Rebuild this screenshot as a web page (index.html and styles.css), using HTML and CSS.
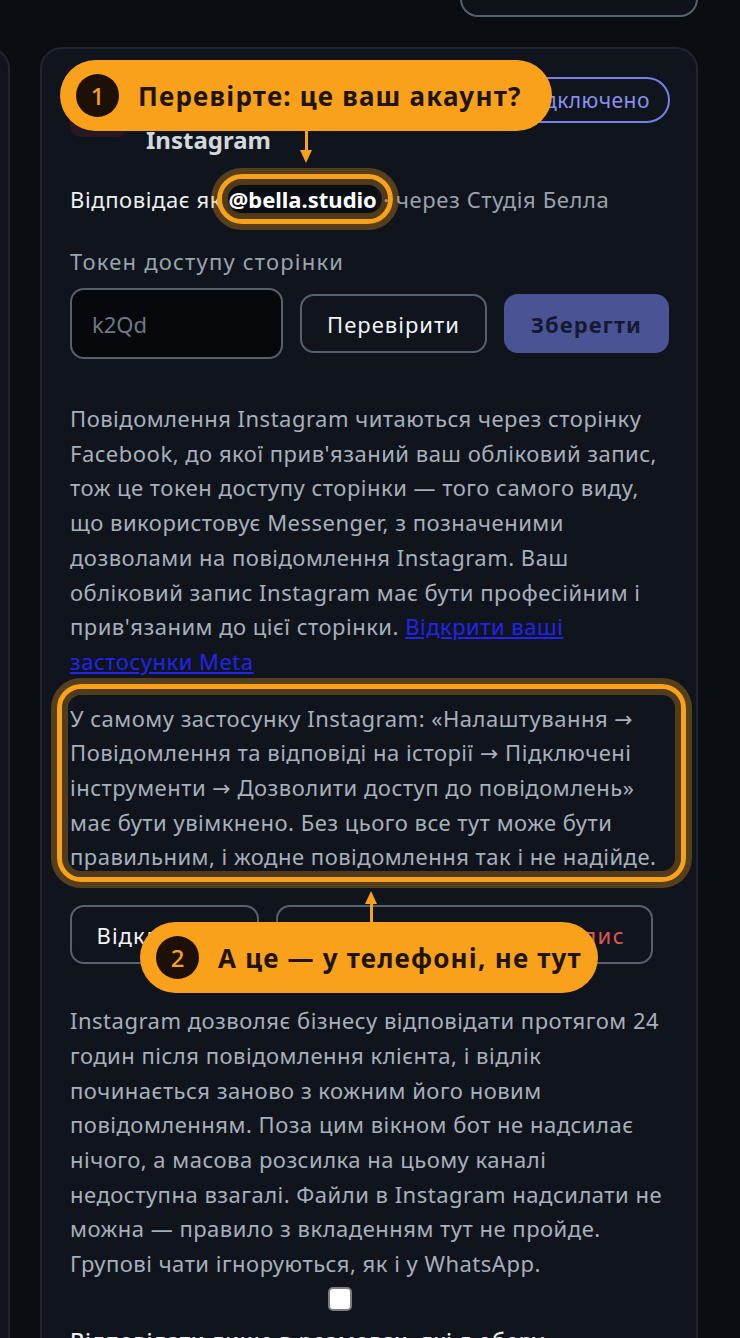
FILE: index.html
```html
<!DOCTYPE html>
<html lang="uk">
<head>
<meta charset="utf-8">
<title>Instagram</title>
<link rel="stylesheet" href="styles.css">
</head>
<body>
<div class="page">
  <div class="topbar">
    <button class="top-btn" type="button"></button>
  </div>
  <div class="cards">
    <div class="card card-prev"></div>
    <section class="card card-main">
      <header class="card-head">
        <div class="channel-icon"></div>
        <h2 class="channel-title">Instagram</h2>
        <span class="status-pill">Підключено</span>
      </header>

      <p class="identity">Відповідає як <span class="handle hl-ring">@bella.studio</span> <span class="muted">· через Студія Белла</span></p>

      <label class="field-label" for="token">Токен доступу сторінки</label>
      <div class="token-row">
        <input class="token-input" id="token" type="text" placeholder="k2Qd">
        <button class="btn btn-outline" type="button">Перевірити</button>
        <button class="btn btn-primary" type="button">Зберегти</button>
      </div>

      <p class="help">Повідомлення Instagram читаються через сторінку<br>Facebook, до якої прив'язаний ваш обліковий запис,<br>тож це токен доступу сторінки — того самого виду,<br>що використовує Messenger, з позначеними<br>дозволами на повідомлення Instagram. Ваш<br>обліковий запис Instagram має бути професійним і<br>прив'язаним до цієї сторінки. <a href="#">Відкрити ваші<br>застосунки Meta</a></p>

      <p class="help help-box hl-ring">У самому застосунку Instagram: «Налаштування →<br>Повідомлення та відповіді на історії → Підключені<br>інструменти → Дозволити доступ до повідомлень»<br>має бути увімкнено. Без цього все тут може бути<br>правильним, і жодне повідомлення так і не надійде.</p>

      <div class="action-row">
        <button class="btn btn-outline btn-wide" type="button">Відключити</button>
        <button class="btn btn-outline btn-danger" type="button">Видалити обліковий запис</button>
      </div>

      <p class="help">Instagram дозволяє бізнесу відповідати протягом 24<br>годин після повідомлення клієнта, і відлік<br>починається заново з кожним його новим<br>повідомленням. Поза цим вікном бот не надсилає<br>нічого, а масова розсилка на цьому каналі<br>недоступна взагалі. Файли в Instagram надсилати не<br>можна — правило з вкладенням тут не пройде.<br>Групові чати ігноруються, як і у WhatsApp.</p>

      <label class="check-row">
        <input class="check" type="checkbox">
        <span class="check-text">Відповідати лише в розмовах, які я оберу</span>
      </label>

      <div class="tip tip-1"><span class="tip-num">1</span><span class="tip-text">Перевірте: це ваш акаунт?</span></div>
      <div class="arrow arrow-down"></div>
      <div class="tip tip-2"><span class="tip-num">2</span><span class="tip-text">А це — у телефоні, не тут</span></div>
      <div class="arrow arrow-up"></div>
    </section>
  </div>
</div>
</body>
</html>
```
FILE: styles.css
```css
* { box-sizing: border-box; }
html, body { margin: 0; padding: 0; }
body {
  background: #0a0d12;
  color: #e6e9ed;
  font-family: "Noto Sans", "DejaVu Sans", sans-serif;
  overflow: hidden;
}
.page { width: 740px; }
.topbar {
  display: flex;
  justify-content: flex-end;
  padding-right: 42px;
  height: 17px;
}
.top-btn {
  width: 238px;
  height: 60px;
  margin-top: -43px;
  background: #0e121a;
  border: 2px solid #56616b;
  border-radius: 18px;
}
.cards {
  display: flex;
  gap: 30px;
  margin-top: 30px;
  margin-left: -290px;
  align-items: flex-start;
}
.card {
  background: #10151d;
  border: 2px solid #20262f;
  border-radius: 22px;
  flex: none;
}
.card-prev { width: 300px; height: 1400px; }
.card-main {
  position: relative;
  width: 658px;
  padding: 28px 26px 0 28px;
  height: 1400px;
}

.card-head {
  display: flex;
  align-items: flex-start;
  gap: 18px;
}
.channel-icon {
  width: 58px;
  height: 58px;
  margin-top: 2px;
  border-radius: 12px;
  background: #2a1820;
  flex: none;
}
.channel-title {
  margin: 47px 0 0 0;
  font-size: 24px;
  line-height: 31px;
  font-weight: 700;
  color: #d3d8de;
  flex: 1;
}
.status-pill {
  flex: none;
  height: 46px;
  padding: 0 18px 0 24px;
  display: flex;
  align-items: center;
  border: 2px solid #7580e6;
  border-radius: 23px;
  color: #8891f0;
  font-size: 21px;
  letter-spacing: 0.5px;
}

.identity {
  margin: 27px 0 0 0;
  font-size: 22px;
  line-height: 35px;
  color: #eef0f3;
  letter-spacing: 0.6px;
}
.handle {
  font-weight: 700;
  color: #ffffff;
  background: #0b0e14;
  border-radius: 8px;
  letter-spacing: 0;
}
.handle.hl-ring::after {
  inset: -10px -16px -10px -11px;
  border-radius: 28px;
}
.muted { color: #9aa3ad; }

.field-label {
  display: block;
  margin-top: 27px;
  font-size: 22px;
  line-height: 35px;
  color: #9aa4ae;
  letter-spacing: 1.2px;
}
.token-row {
  display: flex;
  align-items: center;
  gap: 17px;
  margin-top: 9px;
}
.token-input {
  width: 213px;
  height: 71px;
  background: #06080c;
  border: 2px solid #56616b;
  border-radius: 14px;
  padding: 0 20px;
  font: inherit;
  font-size: 22px;
  color: #e6e9ed;
  outline: none;
}
.token-input::placeholder { color: #6f7882; }
.btn {
  height: 59px;
  border-radius: 14px;
  font-family: inherit;
  font-size: 22px;
  padding: 0 12px;
  letter-spacing: 1px;
}
.btn-outline {
  background: transparent;
  border: 2px solid #56616b;
  color: #f2f4f6;
}
.token-row .btn-outline { width: 187px; }
.btn-primary {
  width: 165px;
  background: #4a5495;
  border: none;
  color: #151a33;
  font-weight: 700;
}

.help {
  margin: 42px 0 0 0;
  font-size: 22px;
  line-height: 34.7px;
  color: #a7b0bb;
  letter-spacing: 0.5px;
  white-space: nowrap;
}
.help a { color: #2323ee; }
.help-box { margin-top: 22px; }
.help-box.hl-ring::after {
  inset: -17px -16px -8px -13px;
  border-radius: 24px;
}

.hl-ring { position: relative; }
.hl-ring::after {
  content: "";
  position: absolute;
  border: 5px solid #f9a11b;
  box-shadow: 0 0 0 6px rgba(249, 161, 27, 0.3), inset 0 0 0 6px rgba(249, 161, 27, 0.28);
  pointer-events: none;
}

.action-row {
  display: flex;
  gap: 17px;
  margin-top: 31px;
}
.btn-wide { width: 189px; }
.btn-danger { width: 377px; color: #e25757; letter-spacing: 1.5px; }
.action-row + .help { margin-top: 39px; }

.check-row {
  display: flex;
  flex-direction: column;
  align-items: flex-start;
  margin-top: 6px;
}
.check {
  appearance: none;
  -webkit-appearance: none;
  width: 24px;
  height: 24px;
  margin: 0 0 0 258px;
  background: #ffffff;
  border: 2px solid #7d7d7d;
  border-radius: 5px;
}
.check-text {
  margin-top: 12px;
  font-size: 22px;
  line-height: 35px;
  font-weight: 500;
  color: #eef0f3;
  letter-spacing: 0.5px;
}

.tip {
  position: absolute;
  display: flex;
  align-items: center;
  height: 71px;
  border-radius: 36px;
  background: #f9a11b;
  padding-left: 16px;
  gap: 19px;
  z-index: 3;
}
.tip-1 { left: 18px; top: 11px; width: 492px; }
.tip-2 { left: 98px; top: 873px; width: 458px; }
.tip-num {
  width: 43px;
  height: 43px;
  border-radius: 50%;
  background: #1c1007;
  color: #f9a11b;
  display: flex;
  align-items: center;
  justify-content: center;
  font-size: 24px;
  font-weight: 500;
  flex: none;
}
.tip-text {
  font-size: 26px;
  font-weight: 700;
  color: #1e1408;
  white-space: nowrap;
  letter-spacing: 1.2px;
}
.arrow {
  position: absolute;
  width: 3px;
  background: #f9a11b;
  z-index: 3;
}
.arrow::after {
  content: "";
  position: absolute;
  left: -5px;
  border-left: 6.5px solid transparent;
  border-right: 6.5px solid transparent;
}
.arrow-down { left: 263px; top: 82px; height: 28px; }
.arrow-down::after { bottom: -4px; border-top: 13px solid #f9a11b; }
.arrow-up { left: 328px; top: 846px; height: 29px; }
.arrow-up::after { top: -4px; border-bottom: 13px solid #f9a11b; }
```
